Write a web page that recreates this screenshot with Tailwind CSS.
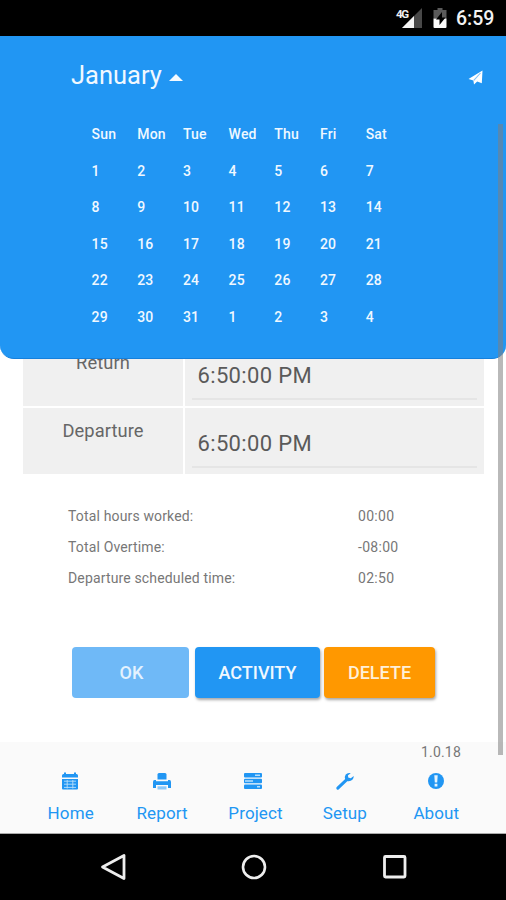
<!DOCTYPE html>
<html lang="en">
<head>
<meta charset="utf-8">
<title>Time sheet</title>
<script src="https://cdn.jsdelivr.net/npm/@tailwindcss/browser@4"></script>
</head>
<body class="w-[506px] h-[900px] overflow-hidden bg-white font-[Roboto,sans-serif]">
<div class="relative flex h-[900px] w-[506px] flex-col overflow-hidden">

  <!-- Status bar -->
  <div class="flex h-9 shrink-0 items-center justify-end bg-black pr-[11px]">
    <svg class="h-9 w-[60px]" viewBox="0 0 60 36">
      <path d="M35 8V28H15z" fill="#484848"/>
      <path d="M27 16V28H15z" fill="#f4f4f4"/>
      <text x="9" y="17.500" font-family="Roboto" font-size="11.500" font-weight="700" fill="#f0f0f0" textLength="13">4G</text>
      <path d="M50.500 8h5v2h4v8.500h-13V10h4z" fill="#5a5a5a"/>
      <path d="M46.500 18.500h13V27a1 1 0 0 1-1 1h-11a1 1 0 0 1-1-1z" fill="#fafafa"/>
      <path d="M55 12l-6 7.500h3.500V25l6-7.500H55z" fill="#000"/>
    </svg>
    <span class="ml-[9px] w-[39px] whitespace-nowrap pt-[2px] text-[19.500px] font-medium leading-9 text-[#f2f2f2]">6:59</span>
  </div>

  <!-- Entries -->
  <main class="flex h-[706px] shrink-0 flex-col bg-white pt-[304px]">
    <div class="ml-[23px] grid w-[461px] grid-cols-[160px_299px] gap-[2px] text-[#666]">
      <div class="h-[66px] bg-[#f0f0f0] pt-[12px] text-center text-[18.300px] leading-[22px] tracking-[0.1px]">Return</div>
      <div class="h-[66px] bg-[#f0f0f0] px-[7px] pt-[14px]"><div class="h-[46px] border-b-2 border-[#e5e5e5] pl-[5.500px] text-[22px] leading-[43px] tracking-[0.35px] text-[#5a5a5a]">6:50:00 PM</div></div>
      <div class="h-[66px] bg-[#f0f0f0] pt-[11px] text-center text-[18.300px] leading-[23px] tracking-[0.1px]">Departure</div>
      <div class="h-[66px] bg-[#f0f0f0] px-[7px] pt-[14px]"><div class="h-[46px] border-b-2 border-[#e5e5e5] pl-[5.500px] text-[22px] leading-[43px] tracking-[0.35px] text-[#5a5a5a]">6:50:00 PM</div></div>
    </div>

    <dl class="mt-[27px] ml-[68px] grid grid-cols-[290px_1fr] text-[14px] leading-[31px] tracking-[0.150px] text-[#777]">
      <dt>Total hours worked:</dt><dd class="tracking-[0.3px]">00:00</dd>
      <dt>Total Overtime:</dt><dd class="tracking-[0.3px]">-08:00</dd>
      <dt>Departure scheduled time:</dt><dd class="tracking-[0.3px]">02:50</dd>
    </dl>

    <div class="mt-[53px] ml-[72px] flex text-[18px] font-medium">
      <button class="mr-[6px] h-[51px] w-[117px] rounded-[4px] bg-[#6fb9f7] pl-[2px] text-[#e4f2fe]">OK</button>
      <button class="mr-[4px] h-[51px] w-[125px] rounded-[4px] bg-[#2196f3] text-[#f0f8ff] shadow-[1px_2px_3px_rgba(0,0,0,0.35)]">ACTIVITY</button>
      <button class="h-[51px] w-[111px] rounded-[4px] bg-[#ff9800] text-[#fff0d8] shadow-[1px_2px_3px_rgba(0,0,0,0.35)]">DELETE</button>
    </div>
  </main>

  <!-- Tab bar -->
  <footer class="flex h-[92px] shrink-0 flex-col border-b border-[#aaa] bg-[#fafafa] text-[#2196f3]">
    <div class="h-5 pr-[45px] text-right text-[14px] leading-[21px] tracking-[0.2px] text-[#777]">1.0.18</div>
    <nav class="ml-[25px] grid w-[457px] grid-cols-5 text-center text-[17px] leading-[22px] tracking-[0.1px]">
      <a class="flex flex-col items-center gap-[11px] pt-[9px]">
        <svg class="h-5 w-5 -translate-x-[1px]" viewBox="0 0 20 20" fill="#2196f3"><path d="M2 6.500V4.500Q2 3 3.500 3H4V1.500h2V3h8V1.500h2V3h.5Q18 3 18 4.500v2zM2 8h16v9.500q0 1-1 1H3q-1 0-1-1z"/><path d="M4 10.200h12M4 13.200h12M4 16.400h12M7.200 9v8.500M12.800 9v8.500" stroke="#b9dffb" stroke-width=".9"/></svg>
        <span>Home</span></a>
      <a class="flex flex-col items-center gap-[11px] pt-[9px]">
        <svg class="h-5 w-5" viewBox="0 0 20 20" fill="#2196f3"><path d="M5.500 8.500V3.500Q5.500 2 7 2h6q1.500 0 1.500 1.500v5z"/><path d="M1 17V11q0-2 1.500-2H4v1.200h12V9h1.500Q19 9 19 11v6h-3v-3H4v3z"/><path d="M5.500 15.300h9v3.200h-9z" fill="#8dc8f8"/></svg>
        <span>Report</span></a>
      <a class="flex flex-col items-center gap-[11px] pt-[9px]">
        <svg class="h-5 w-5" viewBox="0 0 20 20" fill="#2196f3"><rect x="1" y="2" width="18" height="4.600" rx="1"/><rect x="1" y="7.800" width="18" height="4.400" rx="1"/><rect x="1" y="13.400" width="18" height="4.600" rx="1"/><path d="M12 4.300h5M2 10h8M14 15.700h3" stroke="#b9dffb" stroke-width="1.400"/></svg>
        <span class="translate-x-[2px]">Project</span></a>
      <a class="flex flex-col items-center gap-[11px] pt-[9px]">
        <svg class="h-5 w-5" viewBox="0 0 20 20"><path d="M2.800 17.200L11.500 8.800" stroke="#2196f3" stroke-width="3" stroke-linecap="round"/><path d="M15.800 2.200Q12.500 1.300 10.700 3.600Q9.300 5.600 10.200 8.200L12 10Q15.300 10.700 17.400 8.800Q18.800 7.400 18.700 5L15.800 7.200L13.200 6.500L13 4.300z" fill="#2196f3"/></svg>
        <span>Setup</span></a>
      <a class="flex flex-col items-center gap-[11px] pt-[9px]">
        <svg class="h-5 w-5" viewBox="0 0 20 20"><circle cx="10" cy="10" r="8" fill="#2196f3"/><path d="M8.300 4.300h3.400l-.5 7.200H8.800zM8.600 12.800h2.800v2.700H8.600z" fill="#e6f4fe"/></svg>
        <span>About</span></a>
    </nav>
  </footer>

  <!-- System navigation -->
  <div class="flex h-[66px] shrink-0 items-center justify-center gap-[113px] bg-black pl-[1px]">
    <svg class="h-[30px] w-[28px]" viewBox="0 0 28 30" fill="none" stroke="#eee" stroke-width="2.800"><path d="M25 3.500v23L3.500 15z" stroke-linejoin="round"/></svg>
    <svg class="h-[30px] w-[28px]" viewBox="0 0 28 30" fill="none" stroke="#eee" stroke-width="2.600"><circle cx="14" cy="15" r="11"/></svg>
    <svg class="h-[30px] w-[28px]" viewBox="0 0 28 30" fill="none" stroke="#eee" stroke-width="2.800"><rect x="3.500" y="4.500" width="20.500" height="20.500" rx="1"/></svg>
  </div>

  <!-- Month panel, over the entries -->
  <section class="absolute left-0 top-9 h-[323px] w-[506px] rounded-b-[14px] border-b border-[#1580dc] bg-[#2196f3] text-[#f0f8ff]">
    <div class="flex h-[78px] items-center pl-[71px] pr-[23px]">
      <h1 class="text-[25.500px] leading-[78px]">January</h1>
      <svg class="ml-[7px] mt-[5px] h-[7px] w-[14px]" viewBox="0 0 14 7"><path d="M0 7L7 0l7 7z" fill="#f4faff"/></svg>
      <svg class="ml-auto mt-[4px] h-[15px] w-[15px]" viewBox="0 0 15 15"><path d="M14.500.5L13.800 13.300l-4.600-1.800L6 14.500 5.400 10.500.5 9z" fill="#fff"/><path d="M12.500 3L5.800 10.300" stroke="#7fc1f8" stroke-width="1.100"/></svg>
    </div>
    <div class="ml-[91.500px] mt-[1px] grid grid-cols-[repeat(7,45.700px)] auto-rows-[36.600px] text-[14px] font-medium leading-[38px] tracking-[0.2px]">
      <span>Sun</span><span>Mon</span><span>Tue</span><span>Wed</span><span>Thu</span><span>Fri</span><span>Sat</span>
      <span>1</span><span>2</span><span>3</span><span>4</span><span>5</span><span>6</span><span>7</span>
      <span>8</span><span>9</span><span>10</span><span>11</span><span>12</span><span>13</span><span>14</span>
      <span>15</span><span>16</span><span>17</span><span>18</span><span>19</span><span>20</span><span>21</span>
      <span>22</span><span>23</span><span>24</span><span>25</span><span>26</span><span>27</span><span>28</span>
      <span>29</span><span>30</span><span>31</span><span>1</span><span>2</span><span>3</span><span>4</span>
    </div>
  </section>

  <!-- Scroll thumb -->
  <div class="absolute left-[498px] top-[124px] h-[631px] w-[5px] bg-[#808080]/55"></div>
</div>
</body>
</html>
